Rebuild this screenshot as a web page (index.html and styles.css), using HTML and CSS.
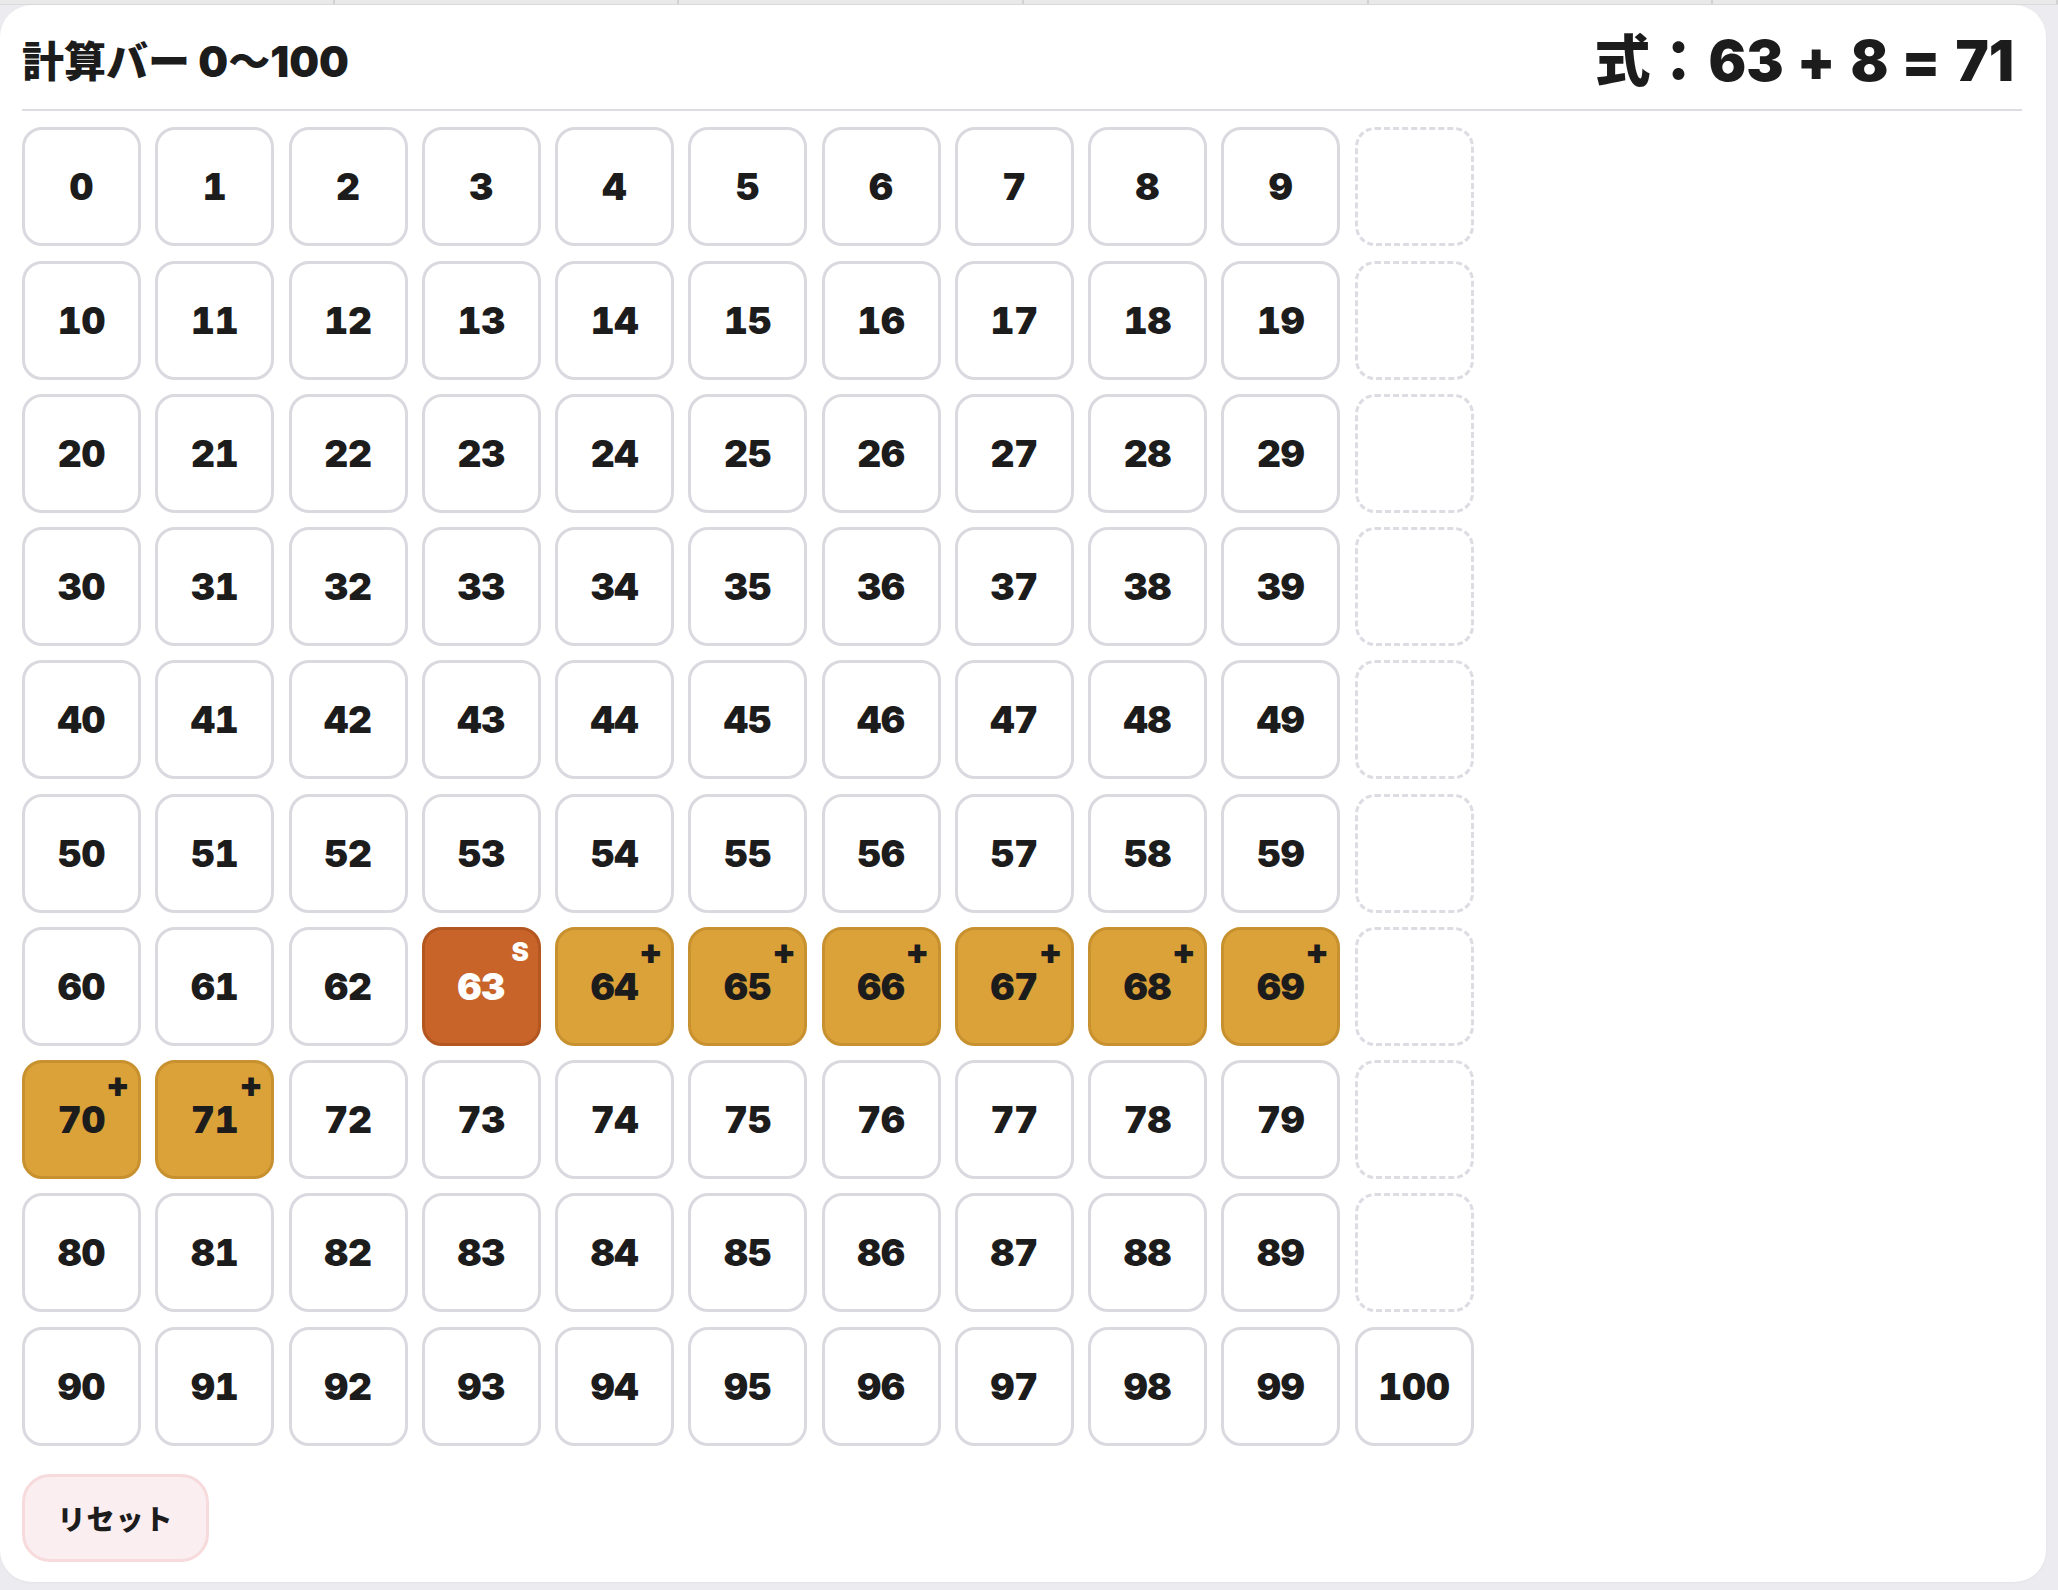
FILE: index.html
```html
<!DOCTYPE html>
<html lang="ja">
<head>
<meta charset="utf-8">
<title>計算バー 0〜100</title>
<link rel="stylesheet" href="styles.css">
</head>
<body>
<div class="tabstrip"><span></span><span></span><span></span><span></span><span></span><span></span></div>
<main class="card">
  <header class="head">
    <h1 class="title">計算バー 0〜100</h1>
    <div class="expr">式： <span class="num">63</span><span class="op">+</span><span class="num">8</span><span class="op">=</span><span class="num">71</span></div>
  </header>
  <div class="grid">
    <div class="cell">0</div><div class="cell">1</div><div class="cell">2</div><div class="cell">3</div><div class="cell">4</div><div class="cell">5</div><div class="cell">6</div><div class="cell">7</div><div class="cell">8</div><div class="cell">9</div><div class="cell empty"></div>
    <div class="cell">10</div><div class="cell">11</div><div class="cell">12</div><div class="cell">13</div><div class="cell">14</div><div class="cell">15</div><div class="cell">16</div><div class="cell">17</div><div class="cell">18</div><div class="cell">19</div><div class="cell empty"></div>
    <div class="cell">20</div><div class="cell">21</div><div class="cell">22</div><div class="cell">23</div><div class="cell">24</div><div class="cell">25</div><div class="cell">26</div><div class="cell">27</div><div class="cell">28</div><div class="cell">29</div><div class="cell empty"></div>
    <div class="cell">30</div><div class="cell">31</div><div class="cell">32</div><div class="cell">33</div><div class="cell">34</div><div class="cell">35</div><div class="cell">36</div><div class="cell">37</div><div class="cell">38</div><div class="cell">39</div><div class="cell empty"></div>
    <div class="cell">40</div><div class="cell">41</div><div class="cell">42</div><div class="cell">43</div><div class="cell">44</div><div class="cell">45</div><div class="cell">46</div><div class="cell">47</div><div class="cell">48</div><div class="cell">49</div><div class="cell empty"></div>
    <div class="cell">50</div><div class="cell">51</div><div class="cell">52</div><div class="cell">53</div><div class="cell">54</div><div class="cell">55</div><div class="cell">56</div><div class="cell">57</div><div class="cell">58</div><div class="cell">59</div><div class="cell empty"></div>
    <div class="cell">60</div><div class="cell">61</div><div class="cell">62</div><div class="cell start">63<span class="badge">S</span></div><div class="cell step">64<span class="badge">+</span></div><div class="cell step">65<span class="badge">+</span></div><div class="cell step">66<span class="badge">+</span></div><div class="cell step">67<span class="badge">+</span></div><div class="cell step">68<span class="badge">+</span></div><div class="cell step">69<span class="badge">+</span></div><div class="cell empty"></div>
    <div class="cell step">70<span class="badge">+</span></div><div class="cell step">71<span class="badge">+</span></div><div class="cell">72</div><div class="cell">73</div><div class="cell">74</div><div class="cell">75</div><div class="cell">76</div><div class="cell">77</div><div class="cell">78</div><div class="cell">79</div><div class="cell empty"></div>
    <div class="cell">80</div><div class="cell">81</div><div class="cell">82</div><div class="cell">83</div><div class="cell">84</div><div class="cell">85</div><div class="cell">86</div><div class="cell">87</div><div class="cell">88</div><div class="cell">89</div><div class="cell empty"></div>
    <div class="cell">90</div><div class="cell">91</div><div class="cell">92</div><div class="cell">93</div><div class="cell">94</div><div class="cell">95</div><div class="cell">96</div><div class="cell">97</div><div class="cell">98</div><div class="cell">99</div><div class="cell">100</div>
  </div>
  <button class="reset" type="button">リセット</button>
</main>
</body>
</html>
```

FILE: styles.css
```css
* { box-sizing: border-box; }

html, body {
  margin: 0;
  padding: 0;
}

body {
  background: #ececf0;
  font-family: Inter, "Noto Sans CJK JP", sans-serif;
  color: #1c1c1c;
  width: 2058px;
  height: 1590px;
  overflow: hidden;
}

.tabstrip {
  height: 5px;
  display: flex;
  background: #e9e9e9;
  border-bottom: 1px solid #dadada;
  margin-left: -10px;
}

.tabstrip span {
  width: 345px;
  border-right: 2px solid #d2d2d2;
}

.card {
  width: 2046px;
  height: 1577px;
  background: #ffffff;
  border-radius: 32px;
  padding: 8px 24px 20px 22px;
  display: flex;
  flex-direction: column;
  align-items: flex-start;
  box-shadow: 0 1px 3px rgba(0, 0, 0, 0.04);
}

.head {
  width: 100%;
  height: 99px;
  display: flex;
  align-items: center;
  justify-content: space-between;
  border-bottom: 2px solid #dcdce1;
}

.title {
  margin: 0;
  font-size: 42px;
  font-weight: 900;
  line-height: 50px;
  letter-spacing: 0;
  padding-top: 2px;
}

.expr {
  font-size: 56px;
  font-weight: 900;
  line-height: 68px;
  display: flex;
  align-items: center;
  padding-right: 8px;
}

.expr .num {
  margin: 0 0 0 2px;
}

.expr .op {
  margin: 0 13px;
}

.grid {
  margin-top: 16px;
  display: grid;
  grid-template-columns: repeat(11, 119px);
  grid-auto-rows: 119px;
  gap: 14.25px;
}

.cell {
  position: relative;
  display: flex;
  align-items: center;
  justify-content: center;
  border: 3px solid #d9d9df;
  border-radius: 20px;
  background: #ffffff;
  font-size: 37px;
  font-weight: 900;
  font-variant-numeric: tabular-nums;
  color: #1c1c1c;
}

.cell.empty {
  border: 3px dashed #dcdce2;
}

.cell.start {
  background: #c8642a;
  border-color: #b3561f;
  color: #ffffff;
}

.cell.step {
  background: #dca23a;
  border-color: #c8912f;
}

.badge {
  position: absolute;
  top: 4px;
  right: 9px;
  font-size: 35px;
  font-weight: 900;
  line-height: 35px;
}

.cell.start .badge {
  color: #ffffff;
  font-size: 26px;
  line-height: 26px;
  top: 9px;
  right: 9px;
}

.cell.step .badge {
  color: #1c1c1c;
}

.reset {
  margin-top: 28px;
  width: 187px;
  height: 89px;
  border: 3px solid #f6dadc;
  background: #fbeef0;
  border-radius: 28px;
  font-family: "Noto Sans CJK JP", sans-serif;
  font-size: 28px;
  font-weight: 900;
  letter-spacing: 1px;
  color: #1c1c1c;
  padding: 0;
}
```
